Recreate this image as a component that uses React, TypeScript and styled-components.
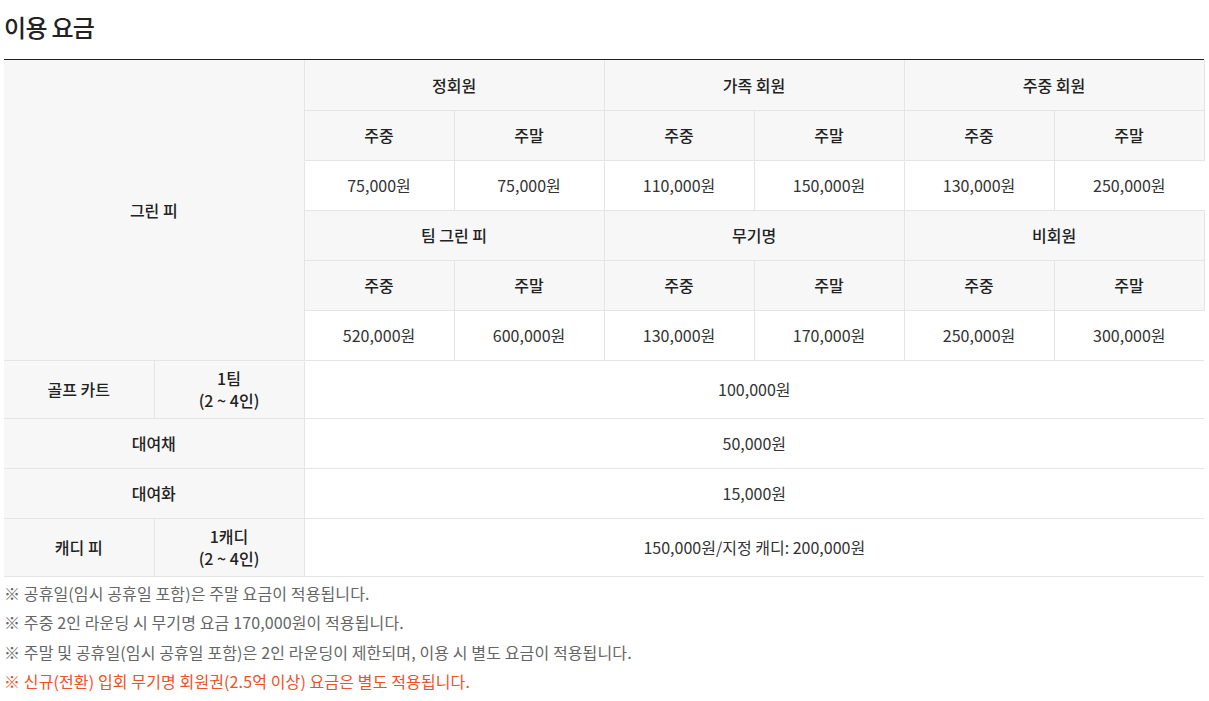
import React from "react";
import styled, { createGlobalStyle } from "styled-components";

const Global = createGlobalStyle`
  html, body { margin: 0; padding: 0; background: #fff; }
  body { font-family: "Noto Sans CJK KR", "Noto Sans", sans-serif; color: #333; }
`;

const Page = styled.div`
  padding: 0 5px 0 4px;
  width: 1200px;
`;

const Title = styled.h2`
  margin: 0;
  padding-top: 10px;
  height: 59px;
  box-sizing: border-box;
  font-size: 24px;
  line-height: 34px;
  font-weight: 500;
  color: #222;
  letter-spacing: -0.7px;
`;

const TableWrap = styled.div`
  border-top: 1px solid #222;
`;

const Table = styled.table`
  width: 1200px;
  border-collapse: collapse;
  table-layout: fixed;
  font-size: 16px;
  line-height: 22.5px;
  letter-spacing: 0;
  tbody > tr:first-child > * { border-top: none; }
`;

const Row = styled.tr`
  height: 50px;
`;

const Th = styled.th`
  background: #f7f7f7;
  color: #222;
  font-weight: 500;
  text-align: center;
  vertical-align: middle;
  padding: 6px 10px;
  border: 1px solid #e5e5e5;
  &:first-child { border-left: none; }
`;

const Td = styled.td`
  background: #fff;
  color: #333;
  font-weight: 400;
  text-align: center;
  vertical-align: middle;
  padding: 6px 10px;
  border: 1px solid #e5e5e5;
  &:last-child { border-right: none; }
`;

const Notes = styled.ul`
  list-style: none;
  margin: 0;
  padding: 2px 0 0;
  font-size: 16px;
  line-height: 29.5px;
  letter-spacing: 0.12px;
`;

const Note = styled.li<{ $accent?: boolean }>`
  color: ${(p) => (p.$accent ? "#f14f24" : "#666")};
`;

const groups1 = [
  { name: "정회원", vals: ["75,000원", "75,000원"] },
  { name: "가족 회원", vals: ["110,000원", "150,000원"] },
  { name: "주중 회원", vals: ["130,000원", "250,000원"] },
];
const groups2 = [
  { name: "팀 그린 피", vals: ["520,000원", "600,000원"] },
  { name: "무기명", vals: ["130,000원", "170,000원"] },
  { name: "비회원", vals: ["250,000원", "300,000원"] },
];

const Cols = () => (
  <colgroup>
    {Array.from({ length: 8 }).map((_, i) => (
      <col key={i} style={{ width: 150 }} />
    ))}
  </colgroup>
);

type G = { name: string; vals: string[] };

const GroupRows = ({ groups, lead }: { groups: G[]; lead?: boolean }) => (
  <>
    <Row>
      {lead && (
        <Th colSpan={2} rowSpan={6}>
          그린 피
        </Th>
      )}
      {groups.map((g) => (
        <Th key={g.name} colSpan={2}>
          {g.name}
        </Th>
      ))}
    </Row>
    <Row>
      {groups.map((g) => (
        <React.Fragment key={g.name}>
          <Th>주중</Th>
          <Th>주말</Th>
        </React.Fragment>
      ))}
    </Row>
    <Row>
      {groups.map((g) => (
        <React.Fragment key={g.name}>
          <Td>{g.vals[0]}</Td>
          <Td>{g.vals[1]}</Td>
        </React.Fragment>
      ))}
    </Row>
  </>
);

export default function App() {
  return (
    <Page>
      <Global />
      <Title>이용 요금</Title>
      <TableWrap>
        <Table>
          <Cols />
          <tbody>
            <GroupRows groups={groups1} lead />
            <GroupRows groups={groups2} />
            <Row>
              <Th>골프 카트</Th>
              <Th>
                1팀
                <br />
                (2 ~ 4인)
              </Th>
              <Td colSpan={6}>100,000원</Td>
            </Row>
            <Row>
              <Th colSpan={2}>대여채</Th>
              <Td colSpan={6}>50,000원</Td>
            </Row>
            <Row>
              <Th colSpan={2}>대여화</Th>
              <Td colSpan={6}>15,000원</Td>
            </Row>
            <Row>
              <Th>캐디 피</Th>
              <Th>
                1캐디
                <br />
                (2 ~ 4인)
              </Th>
              <Td colSpan={6}>150,000원/지정 캐디: 200,000원</Td>
            </Row>
          </tbody>
        </Table>
      </TableWrap>
      <Notes>
        <Note>※ 공휴일(임시 공휴일 포함)은 주말 요금이 적용됩니다.</Note>
        <Note>※ 주중 2인 라운딩 시 무기명 요금 170,000원이 적용됩니다.</Note>
        <Note>※ 주말 및 공휴일(임시 공휴일 포함)은 2인 라운딩이 제한되며, 이용 시 별도 요금이 적용됩니다.</Note>
        <Note $accent>※ 신규(전환) 입회 무기명 회원권(2.5억 이상) 요금은 별도 적용됩니다.</Note>
      </Notes>
    </Page>
  );
}
